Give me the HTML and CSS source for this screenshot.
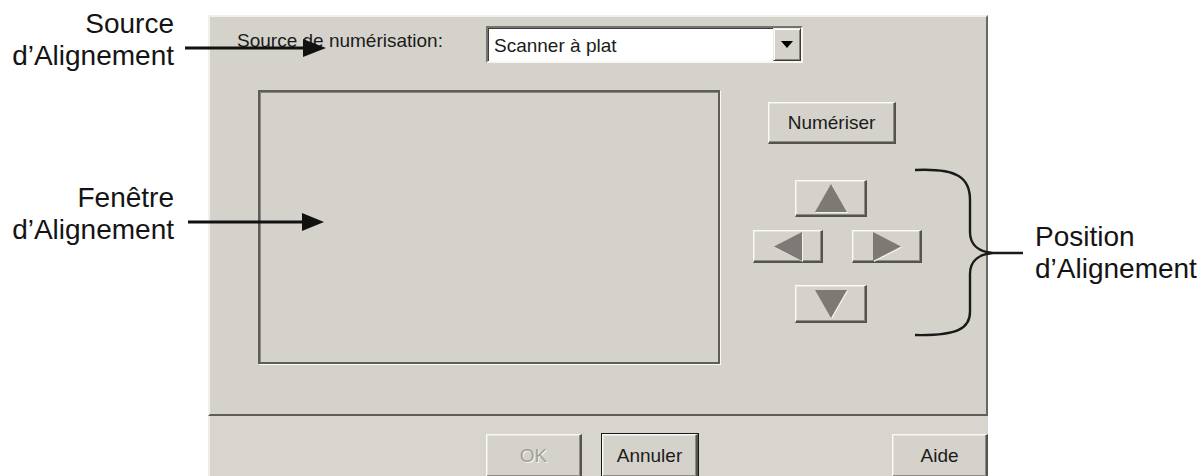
FILE: index.html
```html
<!DOCTYPE html>
<html lang="fr">
<head>
<meta charset="utf-8">
<title>Alignement</title>
<link rel="stylesheet" href="styles.css">
</head>
<body>
<div class="page">
  <div class="notes notes-left">
    <div class="note note-source">Source<br>d’Alignement</div>
    <div class="note note-window">Fenêtre<br>d’Alignement</div>
  </div>

  <div class="dialog">
    <div class="panel">
      <div class="source-row">
        <span class="field-label">Source de numérisation:</span>
        <div class="select">
          <span class="select-value">Scanner à plat</span>
          <span class="select-btn">
            <svg width="12" height="7" viewBox="0 0 12 7"><polygon points="0,0 12,0 6,7" fill="#000"/></svg>
          </span>
        </div>
      </div>
      <div class="work-row">
        <div class="preview"></div>
        <div class="controls">
          <button class="btn btn-scan">Numériser</button>
          <div class="pad">
            <button class="btn pad-btn pad-up"><svg width="32" height="28" viewBox="0 0 32 28"><polygon points="16,0 32,28 0,28" class="tri"/></svg></button>
            <div class="pad-mid">
              <button class="btn pad-btn pad-side"><svg width="28" height="29" viewBox="0 0 28 29"><polygon points="0,14.5 28,0 28,29" class="tri"/></svg></button>
              <button class="btn pad-btn pad-side"><svg width="28" height="29" viewBox="0 0 28 29"><polygon points="28,14.5 0,0 0,29" class="tri"/></svg></button>
            </div>
            <button class="btn pad-btn pad-down"><svg width="32" height="28" viewBox="0 0 32 28"><polygon points="0,0 32,0 16,28" class="tri"/></svg></button>
          </div>
        </div>
      </div>
    </div>
    <div class="footer">
      <button class="btn btn-foot btn-ok">OK</button>
      <button class="btn btn-foot btn-default">Annuler</button>
      <button class="btn btn-foot btn-help">Aide</button>
    </div>
  </div>

  <div class="notes notes-right">
    <div class="note note-position">Position<br>d’Alignement</div>
  </div>
</div>

<svg class="overlay" width="1201" height="476" viewBox="0 0 1201 476">
  <line x1="185" y1="48" x2="306" y2="48" stroke="#111" stroke-width="3"/>
  <polygon points="303,39 326,48 303,57" fill="#111"/>
  <line x1="188" y1="222" x2="305" y2="222" stroke="#111" stroke-width="3"/>
  <polygon points="302,213 324,222 302,231" fill="#111"/>
  <path d="M915 170 C958 168 970 178 970 200 L970 232 C970 246 980 252 993 253 L1023 253 M993 253 C980 254 970 260 970 274 L970 312 C970 328 958 336 915 335" fill="none" stroke="#1a1a1a" stroke-width="2.4"/>
</svg>
</body>
</html>
```

FILE: styles.css
```css
* { box-sizing: border-box; }

html, body {
  margin: 0;
  padding: 0;
  background: #ffffff;
}

body {
  position: relative;
  width: 1201px;
  height: 476px;
  overflow: hidden;
  font-family: "Liberation Sans", Arial, sans-serif;
  color: #151515;
}

.page {
  display: flex;
  height: 476px;
}

/* annotation labels */
.notes {
  flex: none;
  display: flex;
  flex-direction: column;
}

.notes-left {
  width: 208px;
  align-items: flex-end;
  padding-right: 34px;
}

.notes-right {
  flex: 1;
  padding-left: 47px;
  padding-top: 221px;
}

.note {
  font-size: 28px;
  line-height: 32px;
  white-space: nowrap;
  color: #141414;
}

.notes-left .note { text-align: right; }

.note-source { margin-top: 8px; }
.note-window { margin-top: 110px; }

/* dialog */
.dialog {
  flex: none;
  width: 780px;
  margin-top: 15px;
  display: flex;
  flex-direction: column;
  font-size: 19px;
  color: #1b1b1b;
}

.panel {
  height: 401px;
  background: #d5d2cb;
  border-top: 2px solid #f2f0ec;
  border-left: 2px solid #f2f0ec;
  border-right: 2px solid #6a6864;
  border-bottom: 2px solid #5e5c59;
  padding: 9px 0 0 27px;
}

.source-row {
  display: flex;
  align-items: center;
}

.field-label {
  width: 249px;
  flex: none;
  line-height: 22px;
  margin-bottom: 8px;
  white-space: nowrap;
}

.select {
  width: 317px;
  height: 37px;
  display: flex;
  align-items: center;
  background: #ffffff;
  border: 2px solid;
  border-color: #77746f #f7f6f3 #f7f6f3 #77746f;
  box-shadow: inset 1px 1px 0 #3e3d3b;
}

.select-value {
  flex: 1;
  padding-left: 6px;
  line-height: 22px;
  margin-top: 2px;
}

.select-btn {
  width: 28px;
  height: 33px;
  display: flex;
  align-items: center;
  justify-content: center;
  background: #d5d2cb;
  border: 1px solid;
  border-color: #ebe9e5 #3c3b39 #3c3b39 #ebe9e5;
  box-shadow: inset 1px 1px 0 #ffffff, inset -1px -1px 0 #85827d;
}

.work-row {
  display: flex;
  align-items: flex-start;
  margin-top: 27px;
  margin-left: 21px;
}

.preview {
  width: 462px;
  height: 274px;
  flex: none;
  background: #d5d2cb;
  border: 2px solid #5f5d5a;
  box-shadow: 1px 1px 0 #fbfaf7, inset 1px 1px 0 #8a8782;
}

.controls {
  display: flex;
  flex-direction: column;
  align-items: flex-start;
  margin-left: 33px;
}

/* raised windows buttons */
.btn {
  font: inherit;
  color: #1b1b1b;
  background: #d5d2cb;
  border-style: solid;
  border-width: 1px 2px 2px 1px;
  border-color: #fbfaf8 #55534f #55534f #fbfaf8;
  box-shadow: inset -1px -1px 0 #8f8c87, inset 1px 1px 0 #e6e4df;
  padding: 0;
  display: flex;
  align-items: center;
  justify-content: center;
  line-height: 22px;
}

.btn-scan {
  width: 128px;
  height: 42px;
  margin-left: 15px;
  margin-top: 12px;
}

.pad {
  display: flex;
  flex-direction: column;
  align-items: flex-start;
  margin-top: 36px;
}

.pad-btn .tri {
  fill: #7d7a75;
}

.pad-btn svg {
  filter: drop-shadow(1px 1px 0 #f4f2ee);
}

.pad-up,
.pad-down {
  width: 72px;
  height: 37px;
  margin-left: 42px;
}

.pad-down {
  height: 38px;
  margin-top: 22px;
}

.pad-mid {
  display: flex;
  gap: 29px;
  margin-top: 13px;
}

.pad-side {
  width: 70px;
  height: 33px;
}

/* footer strip */
.footer {
  height: 60px;
  display: flex;
  align-items: flex-start;
  padding-top: 18px;
  padding-left: 276px;
  background: #d8d5cf;
  border-left: 2px solid #efede9;
}

.btn-foot {
  width: 96px;
  height: 44px;
}

.btn-ok {
  color: #a29f99;
  text-shadow: 1px 1px 0 #f6f5f2;
}

.btn-default {
  margin-left: 20px;
  outline: 1px solid #1a1a1a;
}

.btn-help {
  margin-left: auto;
}

/* annotation arrows and brace */
.overlay {
  position: absolute;
  left: 0;
  top: 0;
  pointer-events: none;
}
```
